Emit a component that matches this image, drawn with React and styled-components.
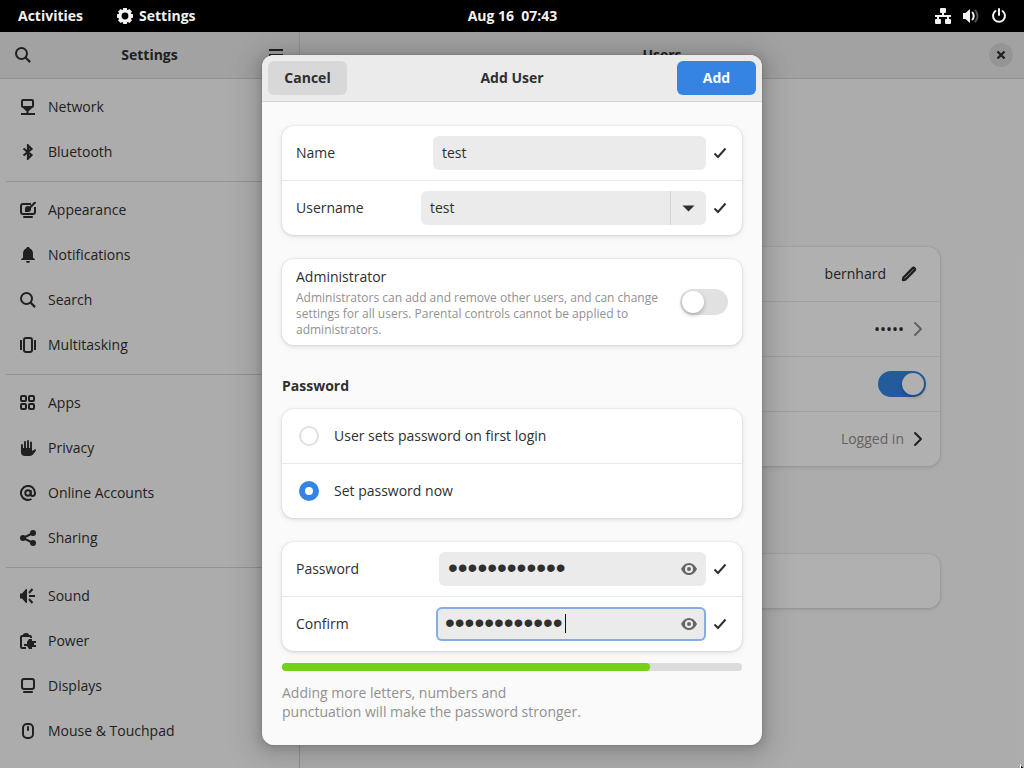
import React, { useState } from "react";
import styled, { createGlobalStyle } from "styled-components";

const Global = createGlobalStyle`
  * { box-sizing: border-box; }
  html, body { margin: 0; height: 100%; overflow: hidden; }
  body, button, input {
    font-family: "Open Sans", "Noto Sans", sans-serif;
    font-size: 14px;
    line-height: 20px;
    color: #2f2f2f;
  }
`;

const Desktop = styled.div`
  display: flex;
  flex-direction: column;
  height: 100vh;
  background: #fafafa;
`;

const TopBar = styled.header`
  display: grid;
  grid-template-columns: 1fr auto 1fr;
  align-items: center;
  height: 32px;
  flex: none;
  padding: 0 17px 0 18px;
  background: #000;
  color: #f2f2f2;
  font-weight: 700;
`;

const BarGroup = styled.div`
  display: flex;
  align-items: center;
  justify-content: ${(p) => (p.$end ? "flex-end" : "flex-start")};
  gap: ${(p) => p.$gap}px;
`;

const BarButton = styled.button`
  display: flex;
  align-items: center;
  gap: 6px;
  border: 0;
  padding: 0;
  background: none;
  color: inherit;
  font-weight: 700;
`;

const Clock = styled.time`
  white-space: pre;
`;

const Svg = styled.svg`
  display: block;
  flex: none;
  width: 16px;
  height: 16px;
`;

const Window = styled.div`
  position: relative;
  display: flex;
  flex: 1;
  min-height: 0;
`;

const Sidebar = styled.aside`
  display: flex;
  flex-direction: column;
  flex: none;
  width: 300px;
  border-right: 1px solid #d3d3d3;
`;

const HeaderBar = styled.div`
  display: grid;
  grid-template-columns: 1fr auto 1fr;
  align-items: center;
  flex: none;
  height: 47px;
  padding: 0 ${(p) => p.$pad}px;
  background: #ebebeb;
  border-bottom: 1px solid #d3d3d3;
`;

const Title = styled.h1`
  grid-column: 2;
  margin: 0;
  font-size: 14px;
  line-height: 20px;
  font-weight: 700;
  text-align: center;
`;

const IconButton = styled.button`
  display: flex;
  align-items: center;
  justify-content: center;
  justify-self: ${(p) => (p.$end ? "end" : "start")};
  width: ${(p) => (p.$round ? 24 : 16)}px;
  height: ${(p) => (p.$round ? 24 : 16)}px;
  padding: 0;
  border: 0;
  border-radius: 50%;
  background: ${(p) => (p.$round ? "#d8d8d8" : "none")};
`;

const Nav = styled.nav`
  flex: 1;
  min-height: 0;
  overflow: hidden;
  padding: 5px 6px;
`;

const NavGroup = styled.ul`
  list-style: none;
  margin: 0;
  padding: 0;
  & + & {
    margin-top: 7px;
    padding-top: 5px;
    border-top: 1px solid #d6d6d6;
  }
`;

const NavLink = styled.a`
  display: flex;
  align-items: center;
  gap: 12px;
  height: 45px;
  padding: 0 14px;
  color: inherit;
  text-decoration: none;
`;

const Main = styled.main`
  display: flex;
  flex-direction: column;
  flex: 1;
  min-width: 0;
`;

const Page = styled.div`
  display: flex;
  flex-direction: column;
  gap: 88px;
  flex: 1;
  min-height: 0;
  width: 100%;
  max-width: 556px;
  margin: 0 auto;
  padding-top: 168px;
`;

const Card = styled.div`
  flex: none;
  background: #fff;
  border-radius: 12px;
  box-shadow: 0 0 0 1px rgba(0, 0, 0, 0.03), 0 1px 3px 1px rgba(0, 0, 0, 0.07),
    0 2px 6px 2px rgba(0, 0, 0, 0.03);
`;

const Row = styled.div`
  display: flex;
  align-items: center;
  justify-content: ${(p) => (p.$end ? "flex-end" : "flex-start")};
  gap: 6px;
  height: 54px;
  padding: 0 14px;
  & + & {
    height: 55px;
    border-top: 1px solid #e9e9e9;
  }
`;

const RowButton = styled.button`
  display: flex;
  align-items: center;
  gap: ${(p) => p.$gap || 6}px;
  padding: 0 ${(p) => p.$inset || 0}px;
  border: 0;
  background: none;
  color: ${(p) => (p.$dim ? "#8f8f8f" : "inherit")};
`;

const Dots = styled.span`
  font-size: 16px;
`;

const Backdrop = styled.div`
  position: absolute;
  inset: 0;
  display: flex;
  align-items: center;
  justify-content: center;
  background: rgba(0, 0, 0, 0.31);
`;

const Dialog = styled.form`
  width: 500px;
  max-width: 100%;
  overflow: hidden;
  border-radius: 12px;
  background: #fafafa;
`;

const DialogFrame = styled.div`
  border-radius: 12px;
  box-shadow: 0 2px 8px 2px rgba(0, 0, 0, 0.13),
    0 3px 20px 10px rgba(0, 0, 0, 0.09), 0 6px 32px 16px rgba(0, 0, 0, 0.04),
    0 0 0 1px rgba(0, 0, 0, 0.05);
`;

const ActionButton = styled.button`
  justify-self: ${(p) => (p.$primary ? "end" : "start")};
  grid-column: ${(p) => (p.$primary ? 3 : 1)};
  width: 79px;
  height: 34px;
  padding: 0;
  border: 0;
  border-radius: 6px;
  font-weight: 700;
  background: ${(p) => (p.$primary ? "#3584e4" : "#d8d8d8")};
  color: ${(p) => (p.$primary ? "#fff" : "#2f2f2f")};
`;

const Content = styled.div`
  display: flex;
  flex-direction: column;
  gap: 24px;
  padding: 24px 20px;
`;

const Label = styled.label`
  flex: 1;
`;

const Field = styled.div`
  position: relative;
  display: flex;
  align-items: center;
  width: ${(p) => p.$width}px;
  height: 34px;
  border-radius: 6px;
  background: #ebebeb;
  box-shadow: ${(p) => (p.$focused ? "inset 0 0 0 2px #82aee5" : "none")};
`;

const Input = styled.input`
  flex: 1;
  min-width: 0;
  height: 34px;
  padding: 0 9px 2px;
  border: 0;
  outline: 0;
  background: none;
`;

const SecretInput = styled(Input)`
  font-family: "Liberation Sans", sans-serif;
  font-size: 28px;
`;

const Caret = styled.span`
  position: absolute;
  left: 129px;
  top: 7px;
  width: 1px;
  height: 19px;
  background: #111;
`;

const DropButton = styled.button`
  display: flex;
  align-items: center;
  justify-content: center;
  width: 36px;
  height: 34px;
  padding: 0;
  border: 0;
  border-left: 1px solid #d5d5d5;
  background: none;
`;

const EyeButton = styled.button`
  padding: 0 9px;
  border: 0;
  background: none;
  color: #656565;
`;

const AdminRow = styled.div`
  display: flex;
  align-items: center;
  justify-content: space-between;
  gap: 16px;
  padding: 7px 14px;
`;

const AdminText = styled.label`
  display: flex;
  flex-direction: column;
  gap: 2px;
  max-width: 368px;
  line-height: 22px;
`;

const Caption = styled.span`
  font-size: 12px;
  line-height: 16px;
  color: #919191;
`;

const Switch = styled.input`
  appearance: none;
  flex: none;
  display: flex;
  width: 48px;
  height: 26px;
  margin: 0;
  padding: 2px;
  border-radius: 13px;
  background: #e1e1e1;
  &::before {
    content: "";
    width: 22px;
    height: 22px;
    border-radius: 50%;
    background: #fff;
    box-shadow: 0 2px 4px rgba(0, 0, 0, 0.25);
  }
  &:checked {
    justify-content: flex-end;
    background: #3584e4;
  }
`;

const Section = styled.section`
  display: flex;
  flex-direction: column;
  gap: 12px;
`;

const SectionTitle = styled.h2`
  margin: 6px 0 0;
  font-size: 14px;
  line-height: 22px;
  font-weight: 700;
`;

const RadioLabel = styled.label`
  display: flex;
  align-items: center;
  gap: 15px;
  padding-left: 3px;
`;

const Radio = styled.input`
  appearance: none;
  width: 20px;
  height: 20px;
  margin: 0;
  border: 2px solid #e0e0e0;
  border-radius: 50%;
  background: #fff;
  &:checked {
    border: 6px solid #3584e4;
  }
`;

const Meter = styled.div`
  height: 8px;
  border-radius: 4px;
  background: #dcdcdc;
`;

const MeterFill = styled.div`
  height: 8px;
  border-radius: 4px;
  background: #73d216;
`;

const Hint = styled.p`
  margin: 0;
  max-width: 310px;
  line-height: 19px;
  color: #919191;
`;

const Pointer = styled.svg`
  position: absolute;
  right: 0;
  bottom: 0;
  width: 4px;
  height: 4px;
`;

const line = { fill: "none", stroke: "currentColor", strokeWidth: 2 };
const round = { ...line, strokeLinecap: "round", strokeLinejoin: "round" };

const shapes = {
  gear: (
    <>
      <circle cx="8" cy="8" r="5" {...line} strokeWidth="3.2" />
      {[0, 45, 90, 135, 180, 225, 270, 315].map((a) => (
        <path key={a} d="M6.200 0h3.600l.6 3H5.600z" transform={`rotate(${a} 8 8)`} />
      ))}
    </>
  ),
  search: (
    <>
      <circle cx="6.5" cy="6.5" r="5.5" {...line} />
      <path d="M10.5 10.5l4.6 4.6" {...line} strokeWidth="2.2" />
    </>
  ),
  menu: <path d="M1 3h14M1 8h14M1 13h14" {...line} />,
  close: <path d="M4.5 4.5l7 7M11.5 4.5l-7 7" {...line} strokeWidth="2.2" />,
  wired: (
    <>
      <rect x="5" y="0" width="6" height="5" rx="1" />
      <rect x="0" y="11" width="6" height="5" rx="1" />
      <rect x="10" y="11" width="6" height="5" rx="1" />
      <path d="M7 4h2v3h7v2h-2v3h-2V9H4v3H2V9H0V7h7z" />
    </>
  ),
  volume: (
    <>
      <path d="M0 5h2.500L7 1v14l-4.500-4H0z" />
      <path d="M9.500 4.500q2.500 3.500 0 7" {...round} />
      <path d="M12.500 2.500q4 5.500 0 11" {...round} opacity=".35" />
    </>
  ),
  power: (
    <>
      <path d="M4.500 3A6 6 0 1 0 11.500 3" {...round} />
      <path d="M8 1v6" {...round} />
    </>
  ),
  network: (
    <>
      <rect x="2" y="1" width="11" height="7" rx="1" {...line} />
      <path d="M3.500 9h8v1l-2 1v1h-1v2h-2v-2h-1v-1l-2-1z" />
      <path d="M1 14h14v2H1z" />
    </>
  ),
  bluetooth: (
    <path d="M3.500 4.500l8 6.500-3.500 3.500v-13l3.500 3.500-8 6.500" {...line} strokeWidth="2.2" />
  ),
  appearance: (
    <>
      <path d="M11 2H3Q1 2 1 4v6q0 2 2 2h10q2 0 2-2V5" {...line} />
      <path d="M3 15q0-1 1-1h8q1 0 1 1 0 1-1 1H4q-1 0-1-1z" />
      <path d="M5 10V7q0-3 3-3 1 0 1.500.5L14 0h2v1l-5 5q.5 4-3 4z" />
    </>
  ),
  bell: (
    <>
      <path d="M8 0C9 0 9.700.6 9.800 1.600 12 2.400 13 4.500 13 7v3.500l2 2V13H1v-.5l2-2V7c0-2.500 1-4.600 3.200-5.400C6.300.6 7 0 8 0z" />
      <path d="M6 14h4q0 2-2 2t-2-2z" />
    </>
  ),
  multitasking: (
    <>
      <rect x="4" y="1" width="8" height="14" rx="2" {...line} />
      <path d="M0 3h2v10H0zM14 3h2v10h-2z" />
    </>
  ),
  apps: (
    <>
      <rect x="1" y="1" width="5" height="5" rx="1" {...line} />
      <rect x="9" y="1" width="5" height="5" rx="1" {...line} />
      <rect x="1" y="9" width="5" height="5" rx="1" {...line} />
      <rect x="9" y="9" width="5" height="5" rx="1" {...line} />
    </>
  ),
  hand: (
    <>
      <path
        d="M2 5v6M5 2v9M8 1v10M11 2.500V11"
        {...round}
        strokeWidth="1.9"
      />
      <path d="M1 8h11v3l2.500-1.500q1-.5 1.500.2.200.6-.3 1.200L13 14.500q-1.500 1.500-4 1.500H5q-4 0-4-4z" />
    </>
  ),
  at: (
    <>
      <circle cx="8" cy="8" r="2.700" {...line} />
      <path d="M10.700 5v4q0 2 1.800 2Q15 11 15 8a7 7 0 1 0-3.500 6" {...line} />
    </>
  ),
  share: (
    <>
      <circle cx="3" cy="8" r="3" />
      <circle cx="13" cy="3" r="3" />
      <circle cx="13" cy="13" r="3" />
      <path d="M13 3L3 8l10 5" {...line} />
    </>
  ),
  sound: (
    <>
      <path d="M0 5.500h2L6 1h1v14H6l-4-4.500H0z" />
      <path d="M9 5l3.500-4M9 8h6M9 11l3.500 4" {...line} />
    </>
  ),
  battery: (
    <>
      <path d="M11 5V4q0-1-1-1H2Q1 3 1 4v10q0 1 1 1h4" {...line} />
      <path d="M3 2q0-2 3-2t3 2z" />
      <path d="M7 9l2-3h3v2h4v2h-2v2h2v2h-4v2H9l-2-3H4v-2h3z" />
    </>
  ),
  display: (
    <>
      <rect x="2" y="1" width="12" height="10" rx="2" {...line} />
      <path d="M3 14q0-1 1-1h8q1 0 1 1 0 1-1 1H4q-1 0-1-1z" />
    </>
  ),
  mouse: (
    <>
      <rect x="3" y="1" width="10" height="14" rx="4" {...line} />
      <path d="M8 4v3" {...round} />
    </>
  ),
  check: <path d="M2.500 8.500l3.500 3.500 7.500-8.500" {...line} />,
  down: <path d="M1.500 5.500h12l-6 6z" />,
  eye: (
    <path
      fillRule="evenodd"
      d="M8 2Q13 2 16 8q-3 6-8 6T0 8q3-6 8-6zM8 4a4 4 0 1 0 0 8 4 4 0 0 0 0-8zM8 6a2 2 0 1 1 0 4 2 2 0 0 1 0-4z"
    />
  ),
  pencil: (
    <path
      d="M2 14l.5-2.500L11.500 2.300q1-1 2 0t0 2L4.500 13.500z"
      {...line}
      strokeWidth="2.400"
      strokeLinejoin="round"
    />
  ),
  next: <path d="M5 2l6 6-6 6" {...round} />,
};

const Icon = ({ name }) => (
  <Svg viewBox="0 0 16 16" fill="currentColor" aria-hidden="true">
    {shapes[name]}
  </Svg>
);

const groups = [
  [["network", "Network"], ["bluetooth", "Bluetooth"]],
  [
    ["appearance", "Appearance"],
    ["bell", "Notifications"],
    ["search", "Search"],
    ["multitasking", "Multitasking"],
  ],
  [
    ["apps", "Apps"],
    ["hand", "Privacy"],
    ["at", "Online Accounts"],
    ["share", "Sharing"],
  ],
  [
    ["sound", "Sound"],
    ["battery", "Power"],
    ["display", "Displays"],
    ["mouse", "Mouse & Touchpad"],
  ],
];

function SecretRow({ id, label, width, focused }) {
  return (
    <Row>
      <Label htmlFor={id}>{label}</Label>
      <Field $width={width} $focused={focused}>
        <SecretInput id={id} type="password" defaultValue="abcdefghijkl" autoComplete="off" />
        {focused && <Caret />}
        <EyeButton type="button" aria-label="Show password">
          <Icon name="eye" />
        </EyeButton>
      </Field>
      <Icon name="check" />
    </Row>
  );
}

export default function App() {
  const [strength] = useState(80);
  return (
    <Desktop>
      <Global />
      <TopBar>
        <BarGroup $gap={34}>
          <BarButton>Activities</BarButton>
          <BarButton>
            <Icon name="gear" />
            Settings
          </BarButton>
        </BarGroup>
        <Clock>Aug 16  07:43</Clock>
        <BarGroup $gap={12} $end>
          <Icon name="wired" />
          <Icon name="volume" />
          <Icon name="power" />
        </BarGroup>
      </TopBar>
      <Window>
        <Sidebar>
          <HeaderBar $pad={15}>
            <IconButton aria-label="Search">
              <Icon name="search" />
            </IconButton>
            <Title>Settings</Title>
            <IconButton $end aria-label="Menu">
              <Icon name="menu" />
            </IconButton>
          </HeaderBar>
          <Nav>
            {groups.map((items) => (
              <NavGroup key={items[0][0]}>
                {items.map(([icon, text]) => (
                  <li key={icon}>
                    <NavLink href="#">
                      <Icon name={icon} />
                      {text}
                    </NavLink>
                  </li>
                ))}
              </NavGroup>
            ))}
          </Nav>
        </Sidebar>
        <Main>
          <HeaderBar $pad={11}>
            <Title>Users</Title>
            <IconButton $round $end aria-label="Close">
              <Icon name="close" />
            </IconButton>
          </HeaderBar>
          <Page>
            <Card>
              <Row $end>
                <RowButton $gap={15} $inset={9}>
                  bernhard
                  <Icon name="pencil" />
                </RowButton>
              </Row>
              <Row $end>
                <Dots>•••••</Dots>
                <RowButton $dim aria-label="Change password">
                  <Icon name="next" />
                </RowButton>
              </Row>
              <Row $end>
                <Switch type="checkbox" defaultChecked aria-label="Automatic login" />
              </Row>
              <Row $end>
                <RowButton $dim>Logged in</RowButton>
                <Icon name="next" />
              </Row>
            </Card>
            <Card>
              <Row />
            </Card>
          </Page>
        </Main>
        <Backdrop>
          <DialogFrame>
            <Dialog onSubmit={(e) => e.preventDefault()}>
              <HeaderBar $pad={6}>
                <ActionButton type="button">Cancel</ActionButton>
                <Title>Add User</Title>
                <ActionButton $primary>Add</ActionButton>
              </HeaderBar>
              <Content>
                <Card>
                  <Row>
                    <Label htmlFor="name">Name</Label>
                    <Field $width={273}>
                      <Input id="name" defaultValue="test" />
                    </Field>
                    <Icon name="check" />
                  </Row>
                  <Row>
                    <Label htmlFor="username">Username</Label>
                    <Field $width={285}>
                      <Input id="username" defaultValue="test" />
                      <DropButton type="button" aria-label="Suggestions">
                        <Icon name="down" />
                      </DropButton>
                    </Field>
                    <Icon name="check" />
                  </Row>
                </Card>
                <Card>
                  <AdminRow>
                    <AdminText htmlFor="admin">
                      Administrator
                      <Caption>
                        Administrators can add and remove other users, and can change
                        settings for all users. Parental controls cannot be applied to
                        administrators.
                      </Caption>
                    </AdminText>
                    <Switch id="admin" type="checkbox" />
                  </AdminRow>
                </Card>
                <Section>
                  <SectionTitle>Password</SectionTitle>
                  <Card>
                    <Row>
                      <RadioLabel>
                        <Radio type="radio" name="mode" />
                        User sets password on first login
                      </RadioLabel>
                    </Row>
                    <Row>
                      <RadioLabel>
                        <Radio type="radio" name="mode" defaultChecked />
                        Set password now
                      </RadioLabel>
                    </Row>
                  </Card>
                </Section>
                <Section>
                  <Card>
                    <SecretRow id="password" label="Password" width={267} />
                    <SecretRow id="confirm" label="Confirm" width={270} focused />
                  </Card>
                  <Meter>
                    <MeterFill style={{ width: `${strength}%` }} />
                  </Meter>
                  <Hint>
                    Adding more letters, numbers and
                    <br />
                    punctuation will make the password stronger.
                  </Hint>
                </Section>
              </Content>
            </Dialog>
          </DialogFrame>
        </Backdrop>
        <Pointer viewBox="0 0 4 4" aria-hidden="true">
          <path d="M0 0l4 4H0z" fill="#fff" />
          <path d="M1 1.500L3.500 4H1z" fill="#000" />
        </Pointer>
      </Window>
    </Desktop>
  );
}
